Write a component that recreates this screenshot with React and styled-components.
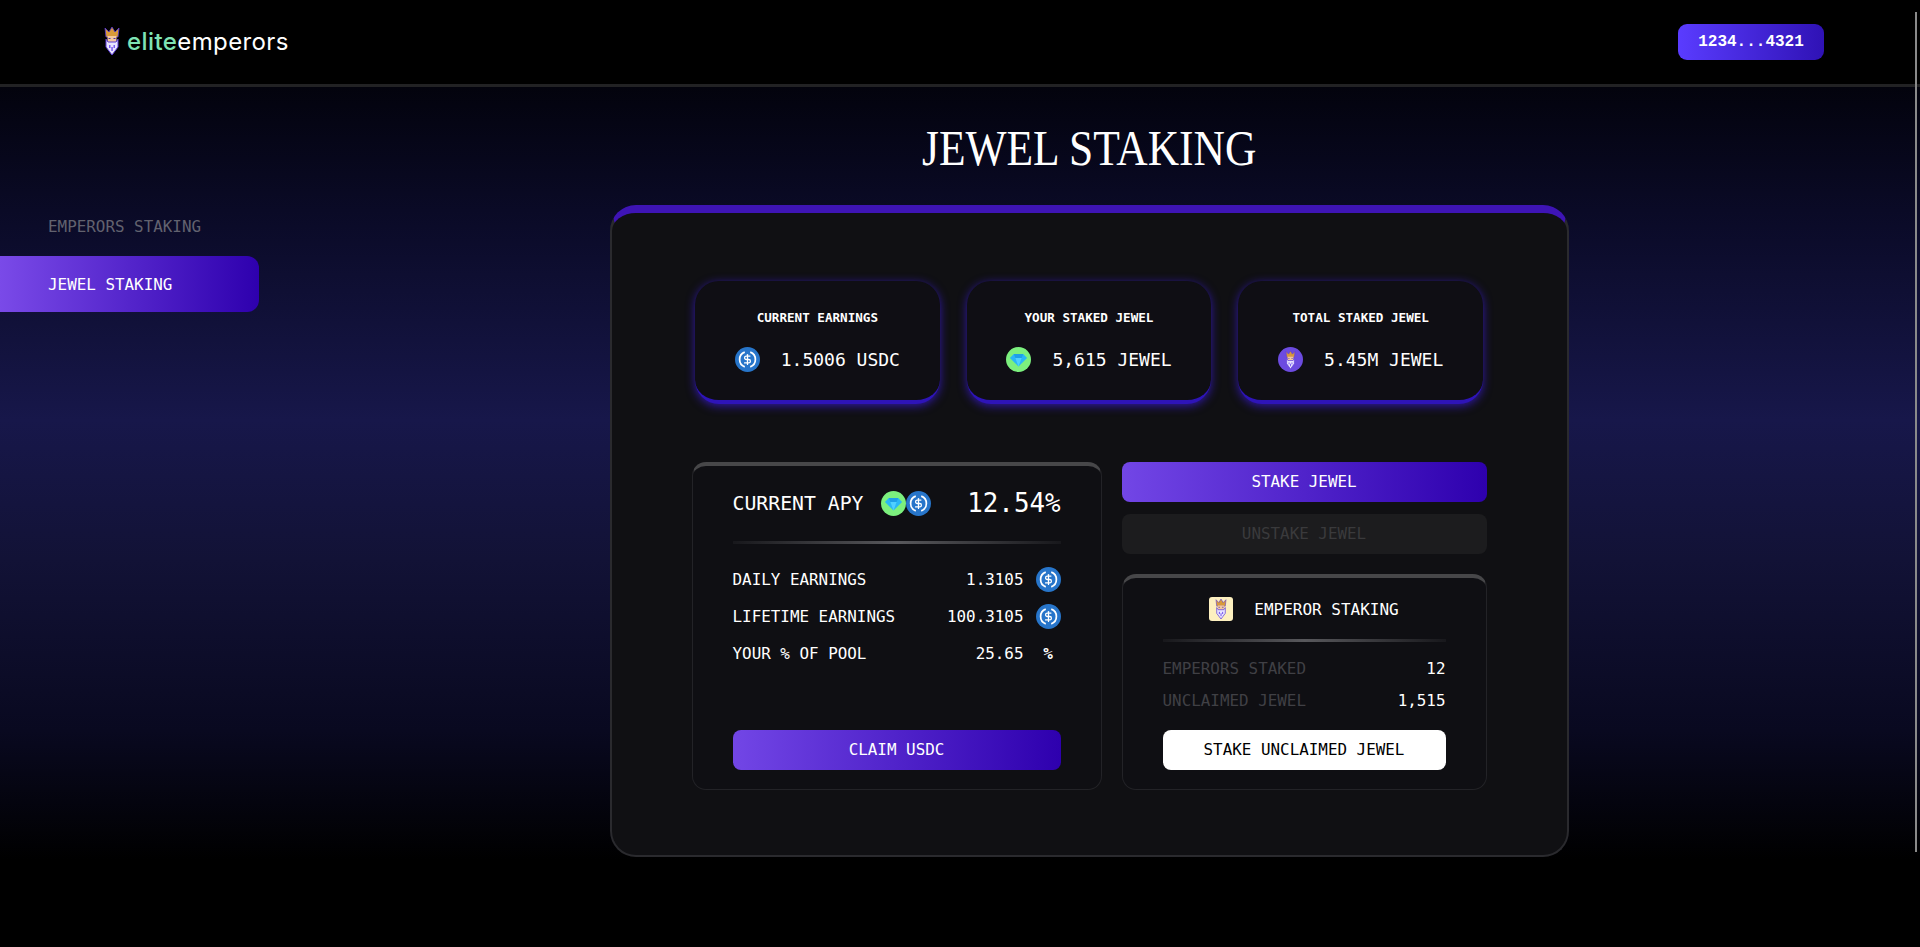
import React from 'react';
import styled, { createGlobalStyle } from 'styled-components';
import { DollarSign } from 'lucide-react';

const MONO = '"DejaVu Sans Mono", "Liberation Mono", monospace';

const GlobalStyle = createGlobalStyle`
  html, body {
    margin: 0;
    padding: 0;
    background: #000;
    overflow: hidden;
  }
  * {
    box-sizing: border-box;
  }
`;

const UsdcIcon = ({ size = 25 }) => (
  <svg width={size} height={size} viewBox="0 0 32 32" style={{ flexShrink: 0 }}>
    <circle cx="16" cy="16" r="16" fill="#2775ca" />
    <path d="M12.5 6.6a10 10 0 0 0 0 18.8" fill="none" stroke="#fff" strokeWidth="2.2" />
    <path d="M19.5 6.6a10 10 0 0 1 0 18.8" fill="none" stroke="#fff" strokeWidth="2.2" />
    <DollarSign x="8.5" y="8.5" width="15" height="15" color="#fff" strokeWidth="2.6" />
  </svg>
);

const DiamondIcon = ({ size = 25 }) => (
  <svg width={size} height={size} viewBox="0 0 32 32" style={{ flexShrink: 0 }}>
    <circle cx="16" cy="16" r="16" fill="#7cf07e" />
    <polygon points="10,9 22,9 27,14 16,25 5,14" fill="#29b6f6" />
    <polygon points="12,14 20,14 16,25" fill="#4fd0ff" />
    <polygon points="10,9 22,9 20,14 12,14" fill="#1e9fe8" />
  </svg>
);

const KingShape = () => (
  <>
    <polygon points="1,1 5,5 8,0 11,5 15,1 14,10 2,10" fill="#d99a3a" stroke="#5b3bd6" strokeWidth="0.8" />
    <rect x="3.5" y="9" width="9" height="6" fill="#f3c9a0" />
    <rect x="4.5" y="11" width="2" height="1" fill="#4a2fb0" />
    <rect x="9.5" y="11" width="2" height="1" fill="#4a2fb0" />
    <polygon points="2,12 4,15 12,15 14,12 14,20 11,24 8,28 5,24 2,20" fill="#e9e4ff" stroke="#5b3bd6" strokeWidth="1" />
    <rect x="5" y="18" width="1.5" height="3" fill="#7a5cf0" />
    <rect x="9.5" y="18" width="1.5" height="3" fill="#7a5cf0" />
    <rect x="7.3" y="20" width="1.5" height="4" fill="#7a5cf0" />
  </>
);

const KingLogo = () => (
  <svg width="16" height="28" viewBox="0 0 16 28" style={{ flexShrink: 0 }}>
    <KingShape />
  </svg>
);

const KingCoin = () => (
  <svg width="25" height="25" viewBox="0 0 32 32" style={{ flexShrink: 0 }}>
    <circle cx="16" cy="16" r="16" fill="#6c4be0" />
    <svg x="9" y="5" width="14" height="23" viewBox="0 0 16 28">
      <KingShape />
    </svg>
  </svg>
);

const KingTile = () => (
  <svg width="24" height="24" viewBox="0 0 24 24" style={{ flexShrink: 0 }}>
    <rect x="0" y="0" width="24" height="24" rx="3" fill="#fdf0c0" />
    <svg x="5" y="2" width="14" height="20" viewBox="0 0 16 28">
      <KingShape />
    </svg>
  </svg>
);

const Page = styled.div`
  width: 100%;
  height: 947px;
  position: relative;
  overflow: hidden;
  font-family: ${MONO};
  color: #fff;
  background: linear-gradient(
    180deg,
    #03030d 87px,
    #0a0a26 210px,
    #17174a 420px,
    #121236 560px,
    #090920 730px,
    #000 860px
  );
`;

const FakeScrollbar = styled.div`
  position: absolute;
  top: 12px;
  right: 3px;
  width: 2px;
  height: 840px;
  background: #8a8a8a;
`;

const Header = styled.header`
  height: 87px;
  background: #000;
  border-bottom: 3px solid #222224;
  display: flex;
  align-items: center;
  justify-content: space-between;
  padding: 0 96px 0 104px;
`;

const Logo = styled.div`
  display: flex;
  align-items: center;
  gap: 7px;
  padding-bottom: 2px;
  font-family: Inter, sans-serif;
  font-size: 24px;
  font-weight: 400;
  letter-spacing: 0.4px;
  color: #fff;
`;

const LogoAccent = styled.span`
  color: #7fe3b4;
  font-weight: 500;
`;

const WalletButton = styled.button`
  width: 146px;
  height: 36px;
  border: 0;
  border-radius: 9px;
  background: linear-gradient(90deg, #5a3cff, #2f12b5);
  color: #fff;
  font-family: "Liberation Mono", monospace;
  font-size: 16px;
  font-weight: 700;
`;

const Body = styled.div`
  display: flex;
`;

const Sidebar = styled.nav`
  width: 258px;
  flex-shrink: 0;
  padding-top: 111px;
  display: flex;
  flex-direction: column;
  gap: 2px;
`;

const NavItem = styled.div`
  height: 56px;
  margin-right: -1px;
  display: flex;
  align-items: center;
  padding-left: 48px;
  font-size: 15.9px;
  color: ${(p) => (p.$active ? '#fff' : '#62626f')};
  border-radius: 0 12px 12px 0;
  background: ${(p) => (p.$active ? 'linear-gradient(90deg, #7a4ae8, #2e00ae)' : 'none')};
`;

const Main = styled.main`
  flex: 1;
  display: flex;
  flex-direction: column;
  align-items: center;
`;

const Title = styled.h1`
  margin: 36px 0 0;
  height: 82px;
  font-family: "Liberation Serif", serif;
  font-size: 50px;
  line-height: 50px;
  font-weight: 400;
  transform: scaleX(0.87);
  color: #fff;
`;

const Panel = styled.section`
  width: 959px;
  height: 652px;
  background: #101013;
  border: 2px solid #2a2a2e;
  border-top: 8px solid #3e14b5;
  border-radius: 26px;
  padding: 68px 80px 64px 80px;
`;

const StatRow = styled.div`
  width: 788px;
  margin: 0 auto;
  display: grid;
  grid-template-columns: repeat(3, 1fr);
  gap: 27px;
`;

const StatCard = styled.div`
  height: 123px;
  padding-top: 30px;
  background: #0f0e14;
  border-radius: 24px;
  border-bottom: 4px solid #2e14b8;
  box-shadow: 0 2px 10px rgba(56, 26, 205, 0.8);
  display: flex;
  flex-direction: column;
  align-items: center;
  gap: 22px;
`;

const StatTitle = styled.div`
  height: 14px;
  font-size: 12.6px;
  line-height: 14px;
  font-weight: 700;
`;

const StatValue = styled.div`
  display: flex;
  align-items: center;
  gap: 21px;
  font-size: 18px;
`;

const Columns = styled.div`
  margin-top: 58px;
  display: grid;
  grid-template-columns: 410px 365px;
  gap: 20px;
  height: 328px;
`;

const Card = styled.div`
  height: ${(p) => p.$height || '100%'};
  margin-top: ${(p) => p.$offset || 0}px;
  background: #0f0f13;
  border: 1px solid #232327;
  border-top: 4px solid #474749;
  border-radius: 14px;
  padding: ${(p) => p.$top || 17}px 40px 19px;
  display: flex;
  flex-direction: column;
`;

const RightColumn = styled.div`
  display: flex;
  flex-direction: column;
`;

const ApyHeader = styled.div`
  height: 40px;
  display: flex;
  align-items: center;
  justify-content: space-between;
`;

const ApyLabel = styled.div`
  display: flex;
  align-items: center;
  gap: 17px;
  font-size: 19.8px;
`;

const CoinPair = styled.div`
  display: flex;
`;

const ApyValue = styled.div`
  font-size: 25.8px;
`;

const Divider = styled.div`
  height: 3px;
  margin-top: ${(p) => p.$top || 18}px;
  background: linear-gradient(90deg, #18181c, #58585c 50%, #18181c);
`;

const Rows = styled.div`
  margin-top: ${(p) => p.$top}px;
  display: flex;
  flex-direction: column;
  gap: ${(p) => p.$gap}px;
`;

const Row = styled.div`
  height: ${(p) => p.$height || 25}px;
  display: flex;
  align-items: center;
  justify-content: space-between;
  font-size: 15.9px;
`;

const RowValue = styled.div`
  display: flex;
  align-items: center;
  gap: 12px;
`;

const PercentSign = styled.span`
  width: 25px;
  text-align: center;
  font-weight: 700;
`;

const MutedLabel = styled.span`
  color: #404045;
`;

const EmperorTitle = styled.div`
  height: 24px;
  display: flex;
  align-items: center;
  justify-content: center;
  gap: 21px;
  font-size: 16px;
`;

const ActionButton = styled.button`
  height: 40px;
  width: 100%;
  flex-shrink: 0;
  border: 0;
  border-radius: 8px;
  padding: 0 0 2px;
  font-family: ${MONO};
  font-size: 15.9px;
  margin-top: ${(p) => p.$top || 0};
  color: ${(p) => ({ primary: '#fff', disabled: '#3a3a3c', white: '#000' }[p.$kind])};
  background: ${(p) =>
    ({
      primary: 'linear-gradient(90deg, #7246e6, #2e00ae)',
      disabled: '#1c1c1e',
      white: '#fff',
    }[p.$kind])};
`;

export default function App() {
  return (
    <Page>
      <GlobalStyle />
      <Header>
        <Logo>
          <KingLogo />
          <span>
            <LogoAccent>elite</LogoAccent>emperors
          </span>
        </Logo>
        <WalletButton>1234...4321</WalletButton>
      </Header>
      <Body>
        <Sidebar>
          <NavItem>EMPERORS STAKING</NavItem>
          <NavItem $active>JEWEL STAKING</NavItem>
        </Sidebar>
        <Main>
          <Title>JEWEL STAKING</Title>
          <Panel>
            <StatRow>
              <StatCard>
                <StatTitle>CURRENT EARNINGS</StatTitle>
                <StatValue>
                  <UsdcIcon />
                  1.5006 USDC
                </StatValue>
              </StatCard>
              <StatCard>
                <StatTitle>YOUR STAKED JEWEL</StatTitle>
                <StatValue>
                  <DiamondIcon />
                  5,615 JEWEL
                </StatValue>
              </StatCard>
              <StatCard>
                <StatTitle>TOTAL STAKED JEWEL</StatTitle>
                <StatValue>
                  <KingCoin />
                  5.45M JEWEL
                </StatValue>
              </StatCard>
            </StatRow>
            <Columns>
              <Card>
                <ApyHeader>
                  <ApyLabel>
                    CURRENT APY
                    <CoinPair>
                      <DiamondIcon />
                      <UsdcIcon />
                    </CoinPair>
                  </ApyLabel>
                  <ApyValue>12.54%</ApyValue>
                </ApyHeader>
                <Divider />
                <Rows $top={23} $gap={12}>
                  <Row>
                    DAILY EARNINGS
                    <RowValue>
                      1.3105 <UsdcIcon />
                    </RowValue>
                  </Row>
                  <Row>
                    LIFETIME EARNINGS
                    <RowValue>
                      100.3105 <UsdcIcon />
                    </RowValue>
                  </Row>
                  <Row>
                    YOUR % OF POOL
                    <RowValue>
                      25.65 <PercentSign>%</PercentSign>
                    </RowValue>
                  </Row>
                </Rows>
                <ActionButton $kind="primary" $top="auto">
                  CLAIM USDC
                </ActionButton>
              </Card>
              <RightColumn>
                <ActionButton $kind="primary">STAKE JEWEL</ActionButton>
                <ActionButton $kind="disabled" $top="12px">
                  UNSTAKE JEWEL
                </ActionButton>
                <Card $height="216px" $top={19} $offset={20}>
                  <EmperorTitle>
                    <KingTile />
                    EMPEROR STAKING
                  </EmperorTitle>
                  <Divider />
                  <Rows $top={16} $gap={12}>
                    <Row $height={20}>
                      <MutedLabel>EMPERORS STAKED</MutedLabel>
                      12
                    </Row>
                    <Row $height={20}>
                      <MutedLabel>UNCLAIMED JEWEL</MutedLabel>
                      1,515
                    </Row>
                  </Rows>
                  <ActionButton $kind="white" $top="auto">
                    STAKE UNCLAIMED JEWEL
                  </ActionButton>
                </Card>
              </RightColumn>
            </Columns>
          </Panel>
        </Main>
      </Body>
      <FakeScrollbar />
    </Page>
  );
}
